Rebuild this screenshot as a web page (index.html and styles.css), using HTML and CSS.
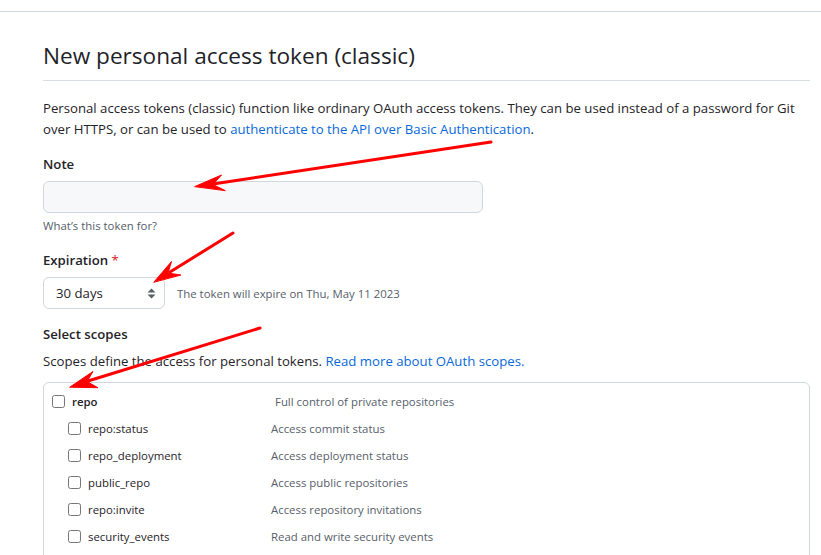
FILE: index.html
```html
<!DOCTYPE html>
<html lang="en">
<head>
<meta charset="utf-8">
<title>New personal access token (classic)</title>
<link rel="stylesheet" href="styles.css">
</head>
<body>
<div class="topbar"></div>
<main class="page">
  <h1 class="subhead">New personal access token (classic)</h1>
  <p class="lead">Personal access tokens (classic) function like ordinary OAuth access tokens. They can be used instead of a password for Git over HTTPS, or can be used to <a href="#">authenticate to the API over Basic Authentication</a>.</p>

  <div class="group group-first">
    <label class="label">Note</label>
    <input class="input" type="text">
    <p class="note">What’s this token for?</p>
  </div>

  <div class="group">
    <label class="label">Expiration <span class="req">*</span></label>
    <div class="exp-row">
      <div class="select">
        <span>30 days</span>
        <svg class="caret" width="9" height="11" viewBox="0 0 9 11"><path d="M4.5 0.5 L8.5 4.5 H0.5 Z M0.5 6.5 H8.5 L4.5 10.5 Z" fill="#57606a"/></svg>
      </div>
      <span class="exp-note">The token will expire on Thu, May 11 2023</span>
    </div>
  </div>

  <div class="group">
    <div class="label">Select scopes</div>
    <p class="scopes-desc">Scopes define the access for personal tokens. <a href="#">Read more about OAuth scopes.</a></p>
    <div class="scopes">
      <div class="row parent">
        <input type="checkbox" class="cb">
        <span class="name strong">repo</span>
        <span class="desc">Full control of private repositories</span>
      </div>
      <div class="row child">
        <input type="checkbox" class="cb">
        <span class="name">repo:status</span>
        <span class="desc">Access commit status</span>
      </div>
      <div class="row child">
        <input type="checkbox" class="cb">
        <span class="name">repo_deployment</span>
        <span class="desc">Access deployment status</span>
      </div>
      <div class="row child">
        <input type="checkbox" class="cb">
        <span class="name">public_repo</span>
        <span class="desc">Access public repositories</span>
      </div>
      <div class="row child">
        <input type="checkbox" class="cb">
        <span class="name">repo:invite</span>
        <span class="desc">Access repository invitations</span>
      </div>
      <div class="row child">
        <input type="checkbox" class="cb">
        <span class="name">security_events</span>
        <span class="desc">Read and write security events</span>
      </div>
    </div>
  </div>
</main>

<svg class="annotations" width="821" height="555" viewBox="0 0 821 555">
  <g fill="#ff0000" stroke="#ff0000" stroke-linecap="round" stroke-linejoin="round">
    <line x1="491" y1="142" x2="213" y2="184" stroke-width="3"/>
    <polygon points="195,186.5 221.5,175 213,184.5 225,190.5" stroke-width="1"/>
    <line x1="233" y1="233" x2="170" y2="272" stroke-width="3"/>
    <polygon points="154,282 171.5,261.5 168,273 180.5,275" stroke-width="1"/>
    <line x1="260" y1="328" x2="88" y2="381" stroke-width="3"/>
    <polygon points="70,387 93,371.5 87,381.5 97.5,387.5" stroke-width="1"/>
  </g>
</svg>
</body>
</html>
```
FILE: styles.css
```css
html, body {
  margin: 0;
  padding: 0;
  overflow: hidden;
  background: #ffffff;
}
body {
  position: relative;
  width: 821px;
  height: 555px;
  font-family: "Open Sans", "Noto Sans", sans-serif;
  font-size: 13.2px;
  line-height: 21px;
  color: #1f2328;
}
a {
  color: #0969da;
  text-decoration: none;
}
.topbar {
  height: 11px;
  border-bottom: 1px solid #d0d7de;
}
.page {
  width: 767px;
  padding: 26px 0 0 43px;
}
.subhead {
  margin: 0;
  font-size: 22.6px;
  font-weight: 400;
  line-height: 36px;
  padding-bottom: 6px;
  border-bottom: 1px solid #d8dee4;
}
.lead {
  margin: 17px 0 0;
}
.group {
  margin-top: 15px;
}
.group-first {
  margin-top: 14px;
}
.label {
  display: block;
  font-weight: 600;
  margin-bottom: 6px;
}
.req {
  color: #cf222e;
  font-weight: 400;
}
.input {
  display: block;
  box-sizing: border-box;
  width: 440px;
  height: 32px;
  margin: 0;
  background: #f6f8fa;
  border: 1px solid #d0d7de;
  border-radius: 6px;
  outline: none;
}
.note {
  margin: 4px 0 0;
  font-size: 11.4px;
  line-height: 18px;
  color: #57606a;
}
.exp-row {
  display: flex;
  align-items: center;
  gap: 12px;
}
.select {
  box-sizing: border-box;
  width: 122px;
  height: 32px;
  display: flex;
  align-items: center;
  justify-content: space-between;
  padding: 0 8px 0 12px;
  border: 1px solid #d0d7de;
  border-radius: 6px;
  background: #ffffff;
}
.caret {
  display: block;
}
.exp-note {
  font-size: 11.4px;
  color: #57606a;
}
.scopes-desc {
  margin: 0;
}
.scopes {
  margin-top: 10px;
  border: 1px solid #d0d7de;
  border-radius: 6px;
  padding: 5px 8px 40px;
}
.row {
  display: flex;
  align-items: center;
  height: 27px;
  font-size: 11.4px;
}
.row.child {
  padding-left: 16px;
}
.cb {
  width: 13px;
  height: 13px;
  margin: 0 7px 0 0;
  flex: none;
}
.name {
  color: #1f2328;
}
.parent .name {
  width: 203px;
}
.child .name {
  width: 183px;
}
.strong {
  font-weight: 600;
}
.desc {
  color: #57606a;
}
.annotations {
  position: absolute;
  left: 0;
  top: 0;
  pointer-events: none;
}
```
